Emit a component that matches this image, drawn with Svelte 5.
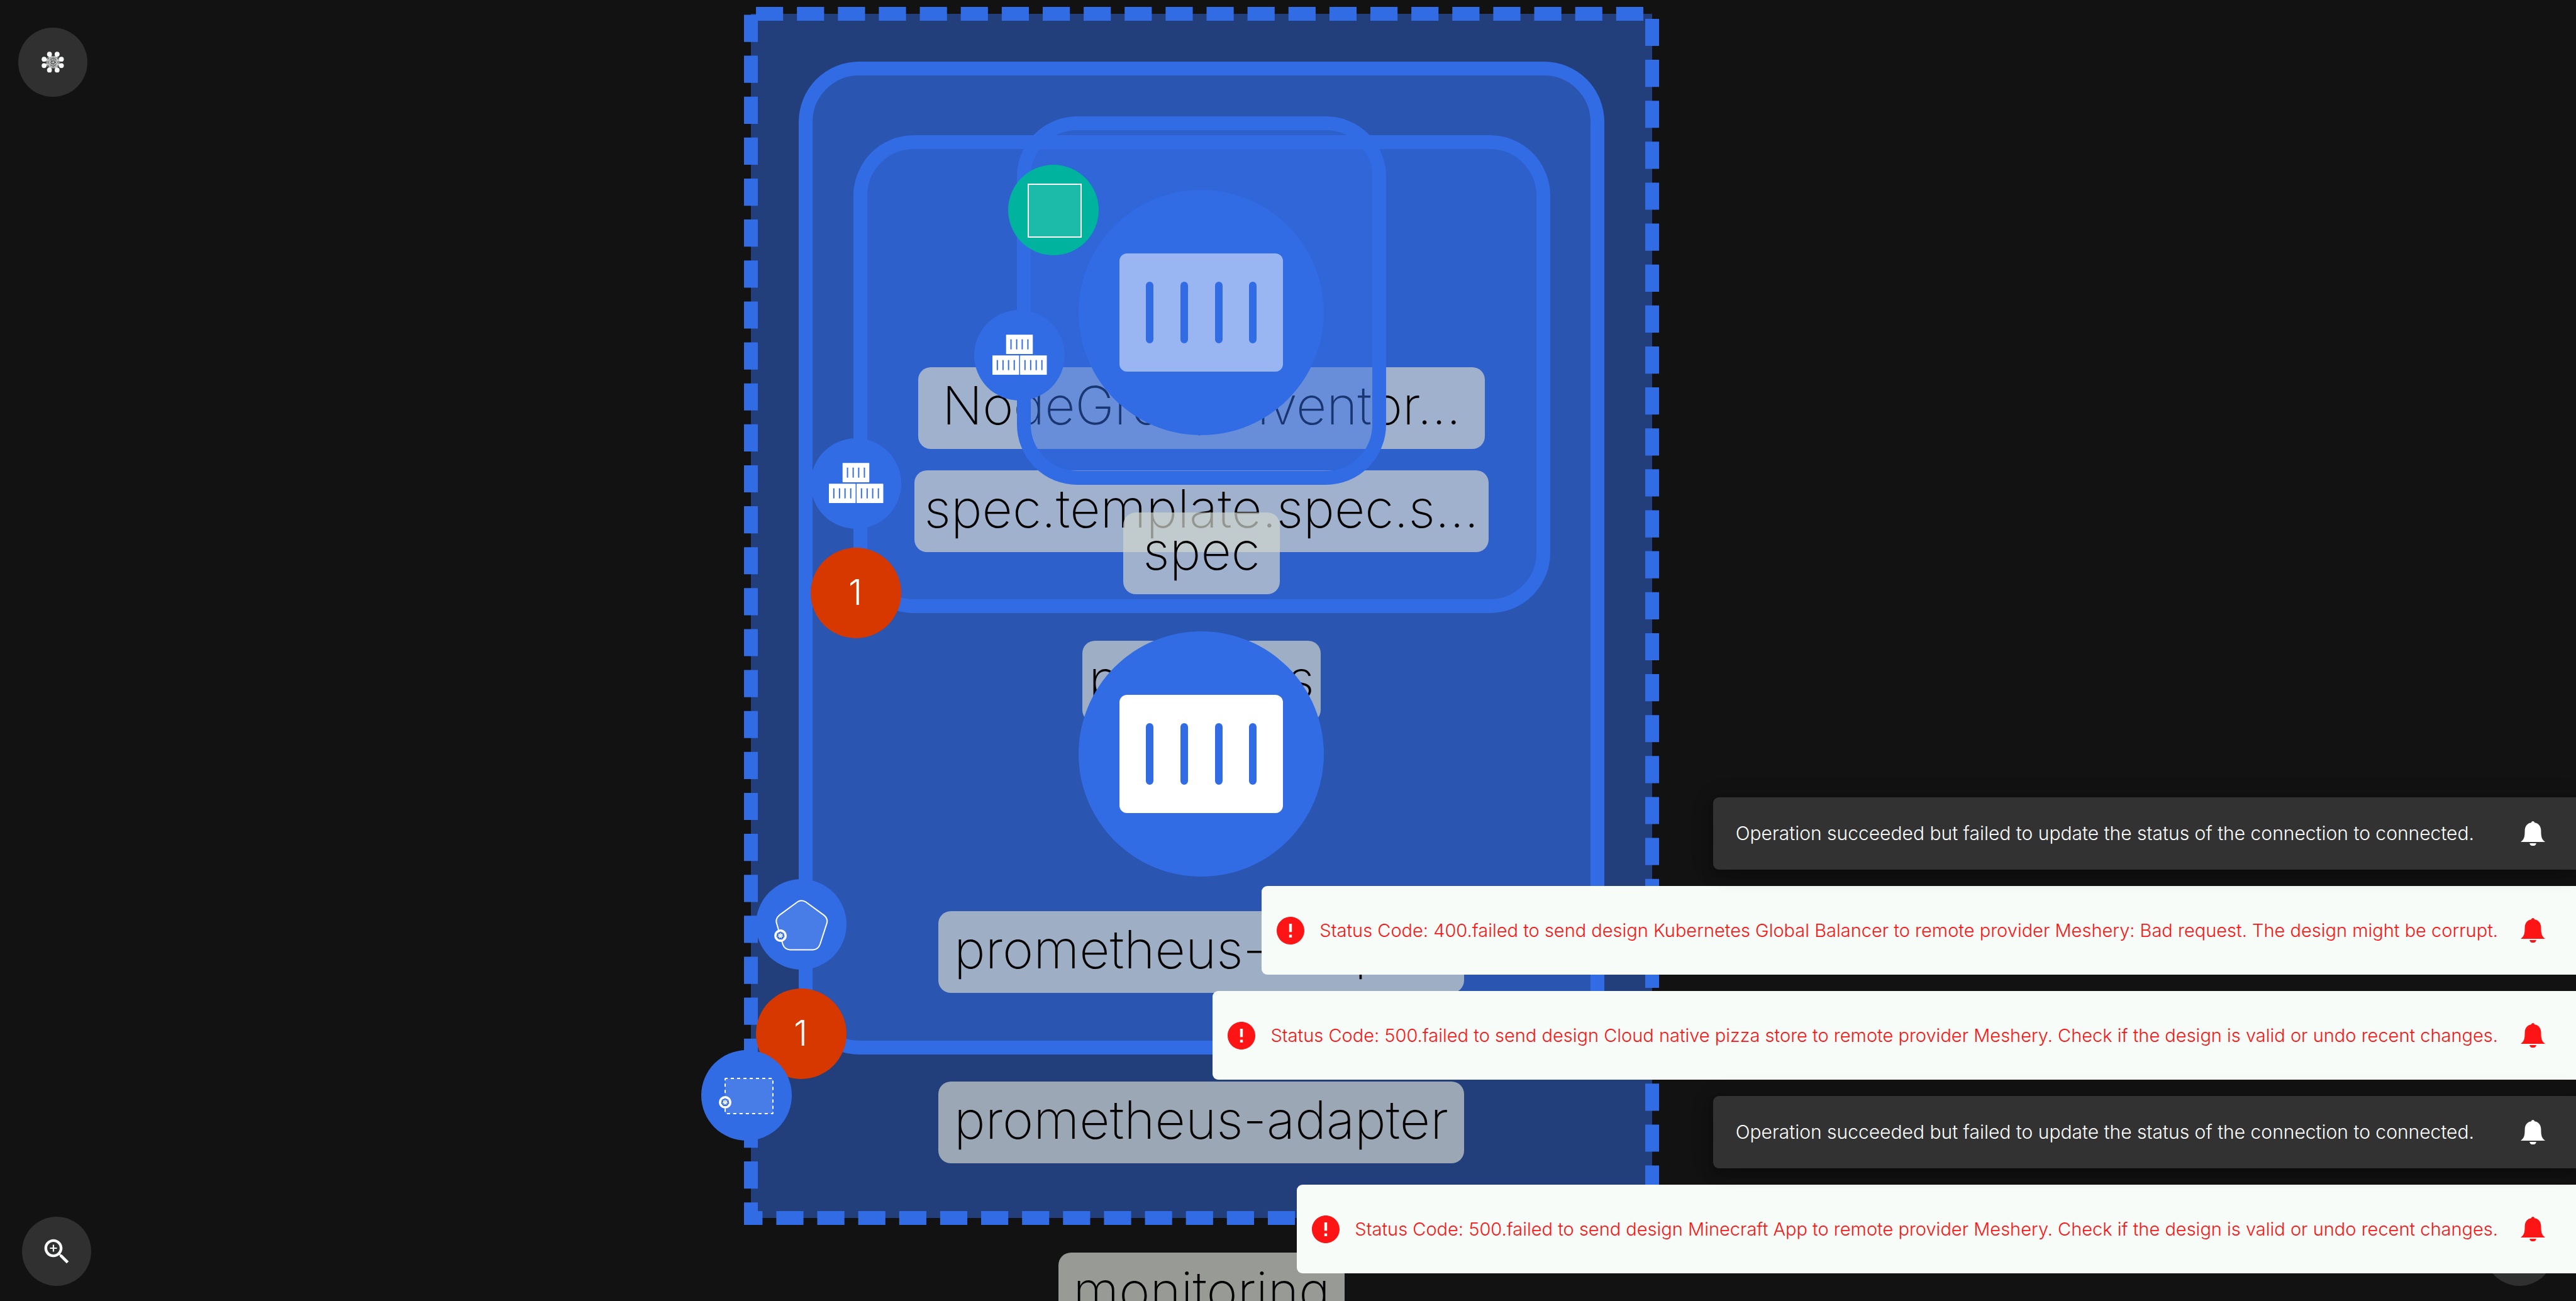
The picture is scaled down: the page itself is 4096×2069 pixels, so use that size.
<script>
  const frames = [
    { x: 1281, y: 109, w: 1259, h: 1557 },
    { x: 1368, y: 226, w: 1086, h: 738 }
  ];
  const innerLabels = [
    { text: 'NodeGroupInventor...', x: 1460, y: 584, w: 901 },
    { text: 'spec.template.spec.s...', x: 1454, y: 748, w: 913 }
  ];
  const outerLabels = [
    { text: 'prometheus-adapter', x: 1492, y: 1449, w: 836 },
    { text: 'prometheus-adapter', x: 1492, y: 1720, w: 836 },
    { text: 'monitoring', x: 1683, y: 1992, w: 455 }
  ];
  const toasts = [
    { kind: 'info', text: 'Operation succeeded but failed to update the status of the connection to connected.' },
    { kind: 'error', text: 'Status Code: 400.failed to send design Kubernetes Global Balancer to remote provider Meshery: Bad request. The design might be corrupt.' },
    { kind: 'error', text: 'Status Code: 500.failed to send design Cloud native pizza store to remote provider Meshery. Check if the design is valid or undo recent changes.' },
    { kind: 'info', text: 'Operation succeeded but failed to update the status of the connection to connected.' },
    { kind: 'error', text: 'Status Code: 500.failed to send design Minecraft App to remote provider Meshery. Check if the design is valid or undo recent changes.' }
  ];
  const dots = [[320, 351], [370, 351], [398, 384], [398, 426], [370, 455], [320, 455], [285, 426], [285, 384]];
  const hubs = dots.map(([x, y]) => [343 + (x - 343) * 0.74, 403 + (y - 403) * 0.74]);
  const chords = hubs.flatMap((a, i) => hubs.slice(i + 2).map((b) => [...a, ...b]));
  const crateBars = [-82, -27, 28, 82];
  const boxes = [[-87, -134], [-176, 1], [4, 1]];
  const boxBars = [32, 69, 105, 142];
  const spokes = [0, 51, 103, 154, 206, 257, 309];
</script>

{#snippet label(text, x, y, w)}
  <rect class="label-box" {x} {y} width={w} height="130" rx="20" />
  <text class="label-text" x={x + w / 2} y={y + 91}>{text}</text>
{/snippet}

{#snippet crate(cy, faded)}
  <circle class="blue" cx="1910" {cy} r="195" />
  <g class="crate" class:faded transform="translate(1910 {cy})">
    <path
      fill-rule="evenodd"
      d="M-118-94H118A12 12 0 0 1 130-82V82A12 12 0 0 1 118 94H-118A12 12 0 0 1-130 82V-82A12 12 0 0 1-118-94Z{crateBars
        .map((b) => `M${b - 6}-43v86a6 6 0 0 0 12 0v-86a6 6 0 0 0-12 0Z`)
        .join('')}"
    />
  </g>
{/snippet}

{#snippet boxStack(cx, cy)}
  <circle class="blue" {cx} {cy} r="72" />
  <g transform="translate({cx} {cy}) scale(0.2443)">
    {#each boxes as [bx, by]}
      <rect x={bx} y={by} width="174" height="126" rx="2" fill="#fff" />
      {#each boxBars as bar}
        <rect class="blue" x={bx + bar - 4} y={by + 30} width="8" height="66" rx="3" />
      {/each}
    {/each}
  </g>
{/snippet}

{#snippet count(cx, cy)}
  <circle class="alert" {cx} {cy} r="72" />
  <text class="count" x={cx - 1} y={cy + 19}>1</text>
{/snippet}

{#snippet helm(cx, cy)}
  <g transform="translate({cx} {cy})">
    <circle r="10" fill="#fff" />
    <path class="blue" d="M0-6.600 5.200-4.100 6.500 1.500 2.900 6H-2.900L-6.500 1.500-5.200-4.100Z" />
    <circle r="2.700" class="rim" />
    {#each spokes as a}
      <path class="rim" d="M0 0V-4.600" transform="rotate({a})" />
    {/each}
  </g>
{/snippet}

<main class="page">
  <svg class="canvas" viewBox="0 0 4096 2069" role="img" aria-label="Design canvas">
    <path class="frame dashed" pathLength="9150" d="M1194 22H2627V1937H1194Z" />
    {#each frames as f}
      <rect class="frame" x={f.x} y={f.y} width={f.w} height={f.h} rx="85" />
    {/each}

    {#each innerLabels as l}
      {@render label(l.text, l.x, l.y, l.w)}
    {/each}
    <rect class="frame" x="1628" y="196" width="565" height="564" rx="85" />
    {@render crate(497, true)}
    {@render label('spec', 1786, 815, 249)}
    {@render label('providers', 1721, 1019, 379)}
    {@render crate(1199, false)}
    {#each outerLabels as l}
      {@render label(l.text, l.x, l.y, l.w)}
    {/each}

    <circle cx="1675" cy="334" r="72" fill="#00b39f" />
    <rect class="outline" x="1635" y="293" width="84" height="84" />
    {@render boxStack(1621, 565)}
    {@render boxStack(1361, 769)}
    {@render count(1361, 943)}

    <circle class="blue" cx="1274" cy="1470" r="72" />
    <path
      class="outline"
      d="M1267.800 1434.500Q1274.700 1429.800 1281.500 1434.500L1310 1455.400Q1317 1461 1314.700 1468.400L1304 1501.500Q1301 1510 1293 1510.400H1256Q1247.500 1510 1244.600 1501.500L1234.900 1468.400Q1232.500 1461 1239.300 1455.400Z"
    />
    {@render helm(1241, 1488)}
    {@render count(1274, 1644)}

    <circle class="blue" cx="1187" cy="1742" r="72" />
    <rect class="outline ticks" x="1153" y="1715" width="76" height="56" rx="1" />
    {@render helm(1153, 1753)}
  </svg>

  <div class="chrome">
    <header class="top">
      <button class="round" aria-label="Open menu">
        <svg class="mesh" viewBox="268 334 148 138" aria-hidden="true">
          {#each chords as [x1, y1, x2, y2]}
            <line {x1} {y1} {x2} {y2} />
          {/each}
          <line x1="320" y1="351" x2="320" y2="455" />
          <line x1="370" y1="351" x2="370" y2="455" />
          <rect x="300" y="365" width="86" height="76" rx="30" />
          {#each dots as [cx, cy]}
            <circle {cx} {cy} r="16" />
          {/each}
        </svg>
      </button>
    </header>
    <footer class="bottom">
      <button class="round" aria-label="Zoom in">
        <svg class="icon" viewBox="0 0 24 24" aria-hidden="true">
          <path
            d="M15.500 14h-.79l-.28-.27C15.410 12.590 16 11.110 16 9.500 16 5.910 13.090 3 9.500 3S3 5.910 3 9.500 5.910 16 9.500 16c1.610 0 3.090-.59 4.230-1.570l.27.28v.79l5 4.990L20.490 19l-4.990-5zm-6 0C7.010 14 5 11.990 5 9.500S7.010 5 9.500 5 14 7.010 14 9.500 11.990 14 9.500 14zm2.500-4h-2v2H9v-2H7V9h2V7h1v2h2v1z"
          />
        </svg>
      </button>
      <button class="round" aria-label="Help"></button>
    </footer>
  </div>

  <section class="toasts" aria-label="Notifications">
    {#each toasts as t}
      <div class="toast {t.kind}" role="status">
        {#if t.kind === 'error'}
          <svg class="mark" viewBox="2 2 20 20" aria-hidden="true">
            <path d="M12 2C6.480 2 2 6.480 2 12s4.480 10 10 10 10-4.480 10-10S17.520 2 12 2zm1 15h-2v-2h2v2zm0-4h-2V7h2v6z" />
          </svg>
        {/if}
        <span class="message">{t.text}</span>
        <button class="bell" aria-label="Open notification">
          <svg viewBox="0 0 160 162" aria-hidden="true">
            <path
              d="M0 135C22 120 27 105 27 62C27 32 45 12 69 9C72-3 88-3 91 9C115 12 133 32 133 62C133 105 138 120 160 135ZM58 144H102C98 168 62 168 58 144Z"
            />
          </svg>
        </button>
      </div>
    {/each}
  </section>
</main>

<style>
  :global(body) {
    background: #121212;
    font-family: Inter, 'Liberation Sans', sans-serif;
  }
  .page {
    display: grid;
    grid-template: 100vh / 100%;
    overflow: hidden;
  }
  .canvas,
  .chrome,
  .toasts {
    grid-area: 1 / 1;
  }
  .canvas {
    display: block;
    width: 100%;
    height: 100%;
  }
  .frame {
    fill: rgba(50, 108, 229, 0.5);
    stroke: #326ce5;
    stroke-width: 22px;
  }
  .dashed {
    stroke-dasharray: 59 30;
    stroke-dashoffset: -11;
  }
  .blue {
    fill: #326ce5;
  }
  .alert {
    fill: #d63800;
  }
  .crate {
    fill: #fff;
  }
  .faded {
    opacity: 0.5;
  }
  .outline {
    fill: rgba(255, 255, 255, 0.11);
    stroke: #fff;
    stroke-width: 2px;
  }
  .ticks {
    stroke-dasharray: 5 5;
    stroke-dashoffset: 2;
  }
  .rim {
    fill: none;
    stroke: #fff;
    stroke-width: 1px;
  }
  .label-box {
    fill: rgba(208, 212, 205, 0.7);
  }
  .label-text {
    font-size: 84px;
    font-weight: 200;
    text-anchor: middle;
    fill: #000;
  }
  .count {
    font-size: 56px;
    font-weight: 300;
    text-anchor: middle;
    fill: #fff;
  }
  .chrome {
    display: flex;
    flex-direction: column;
    justify-content: space-between;
  }
  .top {
    padding: 44px 29px;
  }
  .bottom {
    display: flex;
    justify-content: space-between;
    padding: 0 35px 24px;
  }
  .round {
    display: flex;
    align-items: center;
    justify-content: center;
    width: 110px;
    height: 110px;
    padding: 0;
    border: 0;
    border-radius: 50%;
    background: #303030;
  }
  .mesh {
    width: 36px;
    fill: #f7f9f8;
  }
  .mesh line,
  .mesh rect {
    fill: none;
    stroke: #e4e6e5;
    stroke-width: 3px;
  }
  .icon {
    width: 53px;
    fill: #f7f9f8;
  }
  .toasts {
    display: flex;
    flex-direction: column;
    align-items: flex-end;
    justify-content: flex-end;
    gap: 26px;
    padding-bottom: 44px;
    pointer-events: none;
  }
  .toast {
    display: flex;
    align-items: center;
    box-sizing: border-box;
    padding-right: 49px;
    border-radius: 9px 0 0 9px;
    font-weight: 300;
    line-height: 41px;
    white-space: nowrap;
    pointer-events: auto;
  }
  .info {
    position: relative;
    z-index: 1;
    gap: 74px;
    padding-block: 37px;
    padding-left: 36px;
    background: #323232;
    color: #fff;
    font-size: 30px;
    box-shadow:
      0 7px 11px -2px rgba(0, 0, 0, 0.2),
      0 13px 22px rgba(0, 0, 0, 0.14),
      0 2px 40px rgba(0, 0, 0, 0.12);
  }
  .error {
    gap: 36px;
    padding-block: 50px;
    padding-left: 24px;
    background: #f7fcf8;
    color: #fd1414;
    font-size: 29px;
  }
  .mark {
    width: 44px;
    height: 44px;
    margin: -2px -12px -2px 0;
    fill: currentColor;
  }
  .bell {
    display: block;
    width: 39px;
    padding: 0;
    border: 0;
    background: none;
    color: inherit;
  }
  .bell svg {
    display: block;
    width: 100%;
    fill: currentColor;
  }
</style>
